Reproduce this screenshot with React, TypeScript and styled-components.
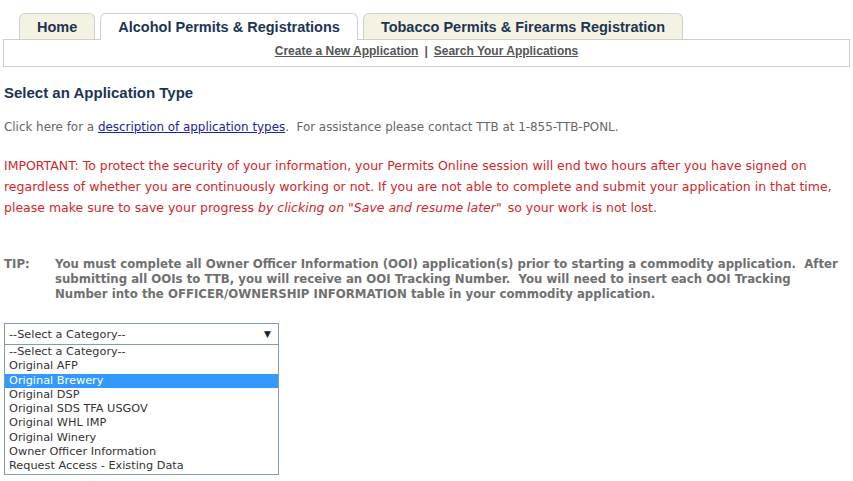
import React, { useState } from 'react'
import styled, { createGlobalStyle } from 'styled-components'

const GlobalStyle = createGlobalStyle`
  body {
    margin: 0;
    background: #fff;
    font-family: "DejaVu Sans", Verdana, sans-serif;
  }
`

const Page = styled.div`
  width: 853px;
  padding-top: 13px;
`

const TabBar = styled.div`
  display: flex;
  align-items: flex-end;
  gap: 5px;
  padding-left: 19px;
  position: relative;
  z-index: 1;
`

const Tab = styled.div<{ $active?: boolean }>`
  height: ${({ $active }) => ($active ? '27px' : '26px')};
  margin-bottom: ${({ $active }) => ($active ? '-1px' : '0')};
  padding: 0 17px;
  display: flex;
  align-items: center;
  box-sizing: border-box;
  border: 1px solid #cfcfcf;
  border-bottom: none;
  border-radius: 6px 6px 0 0;
  background: ${({ $active }) => ($active ? '#fff' : '#f4f2e2')};
  font-family: "Liberation Sans", Arial, sans-serif;
  font-weight: bold;
  font-size: 14.5px;
  color: #1b3553;
`

const SubNav = styled.div`
  margin: 0 3px;
  height: 28px;
  box-sizing: border-box;
  border: 1px solid #cfcfcf;
  display: flex;
  justify-content: center;
  padding-top: 4px;
  font-family: "Liberation Sans", Arial, sans-serif;
  font-weight: bold;
  font-size: 12px;
  color: #555;
`

const NavLink = styled.a`
  color: #555;
  text-decoration: underline;
`

const Sep = styled.span`
  margin: 0 6px;
`

const Content = styled.div`
  padding: 0 4px;
`

const Heading = styled.h2`
  margin: 17px 0 0;
  font-family: "Liberation Sans", Arial, sans-serif;
  font-size: 15px;
  font-weight: bold;
  color: #1b3553;
`

const Info = styled.p`
  margin: 16px 0 0;
  font-size: 11.9px;
  line-height: 21px;
  color: #666;
`

const DescLink = styled.a`
  color: #22229c;
  text-decoration: underline;
`

const Warning = styled.p`
  margin: 17px 0 0;
  font-size: 12.5px;
  line-height: 21px;
  color: #d3262a;
  width: 845px;
`

const Emph = styled.i`
  padding-right: 2px;
`

const Tip = styled.div`
  margin-top: 39px;
  display: grid;
  grid-template-columns: 51px 1fr;
  font-size: 11.75px;
  line-height: 15px;
  font-weight: bold;
  color: #707070;
  padding-right: 4px;
`

const SelectWrap = styled.div`
  margin-top: 21px;
  width: 275px;
  font-size: 11.3px;
  color: #333;
`

const SelectBox = styled.div`
  height: 22px;
  box-sizing: border-box;
  border: 1px solid #7f9db9;
  display: flex;
  align-items: center;
  justify-content: space-between;
  padding: 0 7px 0 4px;
  background: #fff;
`

const Arrow = styled.span`
  font-size: 9px;
  color: #222;
`

const OptionList = styled.ul`
  list-style: none;
  margin: 0;
  padding: 0;
  border: 1px solid #7f9db9;
  border-top: none;
  background: #fff;
`

const Option = styled.li<{ $selected?: boolean }>`
  height: 14.3px;
  line-height: 14px;
  padding: 0 4px;
  background: ${({ $selected }) => ($selected ? '#3399ff' : 'transparent')};
  color: ${({ $selected }) => ($selected ? '#fff' : '#333')};
  white-space: nowrap;
`

const categories = [
  '--Select a Category--',
  'Original AFP',
  'Original Brewery',
  'Original DSP',
  'Original SDS TFA USGOV',
  'Original WHL IMP',
  'Original Winery',
  'Owner Officer Information',
  'Request Access - Existing Data'
]

export default function App() {
  const [hovered, setHovered] = useState(2)

  return (
    <Page>
      <GlobalStyle />
      <TabBar>
        <Tab>Home</Tab>
        <Tab $active>Alcohol Permits &amp; Registrations</Tab>
        <Tab>Tobacco Permits &amp; Firearms Registration</Tab>
      </TabBar>
      <SubNav>
        <NavLink href="#">Create a New Application</NavLink>
        <Sep>|</Sep>
        <NavLink href="#">Search Your Applications</NavLink>
      </SubNav>
      <Content>
        <Heading>Select an Application Type</Heading>
        <Info>
          Click here for a <DescLink href="#">description of application types</DescLink>.&nbsp; For assistance please contact TTB at 1-855-TTB-PONL.
        </Info>
        <Warning>
          IMPORTANT: To protect the security of your information, your Permits Online session will end two hours after you have signed on regardless of whether you are continuously working or not. If you are not able to complete and submit your application in that time, please make sure to save your progress <Emph>by clicking on "Save and resume later"</Emph> so your work is not lost.
        </Warning>
        <Tip>
          <span>TIP:</span>
          <span>
            You must complete all Owner Officer Information (OOI) application(s) prior to starting a commodity application.&nbsp; After submitting all OOIs to TTB, you will receive an OOI Tracking Number.&nbsp; You will need to insert each OOI Tracking Number into the OFFICER/OWNERSHIP INFORMATION table in your commodity application.
          </span>
        </Tip>
        <SelectWrap>
          <SelectBox>
            <span>--Select a Category--</span>
            <Arrow>▼</Arrow>
          </SelectBox>
          <OptionList>
            {categories.map((c, i) => (
              <Option key={c} $selected={i === hovered} onMouseEnter={() => setHovered(i)}>
                {c}
              </Option>
            ))}
          </OptionList>
        </SelectWrap>
      </Content>
    </Page>
  )
}
